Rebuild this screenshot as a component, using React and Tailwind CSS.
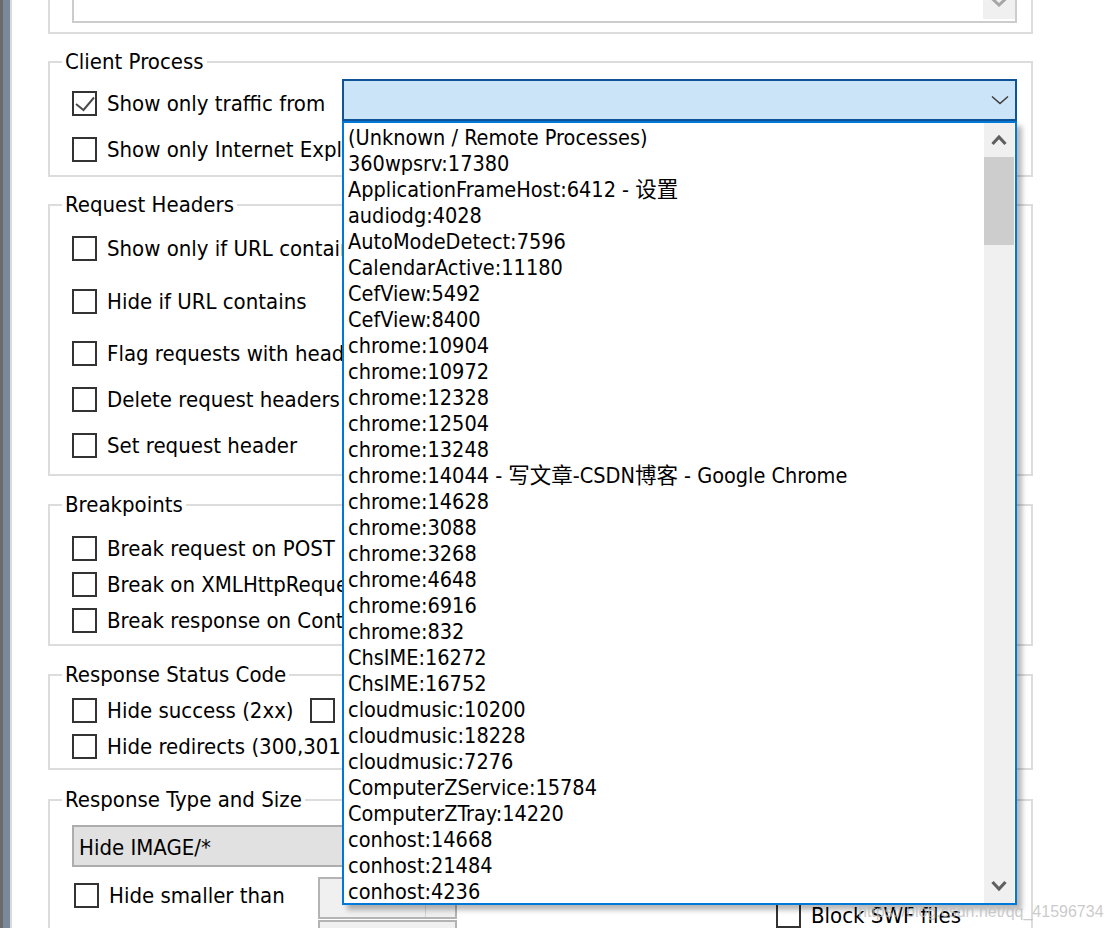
import React from "react";

const processes = [
  "(Unknown / Remote Processes)",
  "360wpsrv:17380",
  "ApplicationFrameHost:6412 - 设置",
  "audiodg:4028",
  "AutoModeDetect:7596",
  "CalendarActive:11180",
  "CefView:5492",
  "CefView:8400",
  "chrome:10904",
  "chrome:10972",
  "chrome:12328",
  "chrome:12504",
  "chrome:13248",
  "chrome:14044 - 写文章-CSDN博客 - Google Chrome",
  "chrome:14628",
  "chrome:3088",
  "chrome:3268",
  "chrome:4648",
  "chrome:6916",
  "chrome:832",
  "ChsIME:16272",
  "ChsIME:16752",
  "cloudmusic:10200",
  "cloudmusic:18228",
  "cloudmusic:7276",
  "ComputerZService:15784",
  "ComputerZTray:14220",
  "conhost:14668",
  "conhost:21484",
  "conhost:4236",
];

function Box({ checked, className = "" }) {
  return (
    <span className={`block w-[25px] h-[25px] border-2 border-[#333333] bg-white shrink-0 ${className}`}>
      {checked && (
        <svg width="21" height="21" viewBox="0 0 21 21" className="block">
          <path d="M2 11 L9.5 17 L20 4.5" fill="none" stroke="#4d4d4d" strokeWidth="2" />
        </svg>
      )}
    </span>
  );
}

function Check({ label, checked, className = "" }) {
  return (
    <div className={`flex items-center h-[25px] ${className}`}>
      <Box checked={checked} />
      <span className="ml-[10px] whitespace-nowrap leading-[25px]">{label}</span>
    </div>
  );
}

function Group({ title, className = "", children }) {
  return (
    <fieldset className={`border-2 border-[#dcdcdc] pl-[22px] pr-[14px] ${className}`}>
      <legend className="ml-[-10px] px-[3px] leading-[24px]">{title}</legend>
      {children}
    </fieldset>
  );
}

function Arrow({ up }) {
  return (
    <svg width="16" height="12" viewBox="0 0 16 12" className="block">
      <path
        d={up ? "M1.5 10 L8 3 L14.5 10" : "M1.5 2 L8 9 L14.5 2"}
        fill="none"
        stroke="#606060"
        strokeWidth="3.2"
      />
    </svg>
  );
}

function ProcessList() {
  return (
    <div className="absolute left-[342px] top-[121px] w-[675px] h-[784px] border-2 border-[#0078d7] bg-white flex shadow-[5px_5px_5px_rgba(0,0,0,0.28)]">
      <div className="flex-1 pl-[4px] pt-[2px] overflow-hidden text-[21.5px]">
        {processes.map((p) => (
          <div key={p} className="h-[26px] leading-[26px] whitespace-nowrap">
            {p}
          </div>
        ))}
      </div>
      <div className="w-[30px] mr-[1px] bg-[#f0f0f0] flex flex-col">
        <div className="h-[34px] flex items-center justify-center">
          <Arrow up />
        </div>
        <div className="h-[88px] bg-[#cdcdcd]" />
        <div className="flex-1" />
        <div className="h-[34px] flex items-center justify-center">
          <Arrow />
        </div>
      </div>
    </div>
  );
}

export default function App() {
  return (
    <div className="relative w-[1112px] h-[928px] overflow-hidden bg-white flex text-[22px] text-black font-['DejaVu_Sans_Condensed','DejaVu_Sans','Noto_Sans_CJK_SC',sans-serif] font-stretch-condensed">
      {/* window edge */}
      <div className="flex shrink-0">
        <div className="w-[3px] bg-[#6b6b6b]" />
        <div className="w-[7px] bg-[#7b8a9a]" />
        <div className="w-[2px] bg-[#dadada]" />
      </div>

      <div className="w-[1021px] pl-[36px] shrink-0">
        {/* previous group, cut off at top */}
        <div className="h-[34px] border-x-2 border-b-2 border-[#dcdcdc] pl-[22px] pr-[14px]">
          <div className="h-[23px] border-x-2 border-b-2 border-[#cccccc] flex justify-end">
            <div className="w-[32px] h-[19px] bg-[#f0f0f0] flex justify-center overflow-hidden">
              <svg width="16" height="10" viewBox="0 0 16 10" className="block -mt-[3px]">
                <path d="M1.5 2 L8 8 L14.5 2" fill="none" stroke="#a6a6a6" strokeWidth="3" />
              </svg>
            </div>
          </div>
        </div>

        <Group title="Client Process" className="mt-[16px] pb-[13px]">
          <div className="flex items-start h-[42px] mt-[5px]">
            <Check label="Show only traffic from" checked className="w-[270px] mt-[12px] shrink-0" />
            <div className="flex-1 h-[42px] bg-[#cce4f7] border-2 border-[#0f5496] flex items-center justify-end pr-[6px]">
              <svg width="18" height="10" viewBox="0 0 18 10" className="block">
                <path d="M1 1.5 L9 8.5 L17 1.5" fill="none" stroke="#3c3c3c" strokeWidth="1.6" />
              </svg>
            </div>
          </div>
          <Check label="Show only Internet Explorer traffic" className="mt-[16px]" />
        </Group>

        <Group title="Request Headers" className="mt-[16px] pb-[16px]">
          <Check label="Show only if URL contains" className="mt-[19px]" />
          <Check label="Hide if URL contains" className="mt-[28px]" />
          <Check label="Flag requests with headers" className="mt-[27px]" />
          <Check label="Delete request headers" className="mt-[21px]" />
          <Check label="Set request header" className="mt-[21px]" />
        </Group>

        <Group title="Breakpoints" className="mt-[17px] pb-[11px]">
          <Check label="Break request on POST" className="mt-[19px]" />
          <Check label="Break on XMLHttpRequest" className="mt-[11px]" />
          <Check label="Break response on Content-Type" className="mt-[11px]" />
        </Group>

        <Group title="Response Status Code" className="mt-[17px] pb-[9px]">
          <div className="flex mt-[11px]">
            <Check label="Hide success (2xx)" className="w-[238px]" />
            <Check label="Hide non-2xx" />
          </div>
          <Check label="Hide redirects (300,301,302,303,307)" className="mt-[11px]" />
        </Group>

        <Group title="Response Type and Size" className="mt-[18px] h-[200px]">
          <div className="mt-[13px] w-[620px] h-[42px] bg-[#e1e1e1] border-2 border-[#adadad] pl-[5px] pt-[2px] leading-[38px]">
            Hide IMAGE/*
          </div>
          <div className="flex mt-[10px]">
            <div className="w-[704px] shrink-0">
              <div className="flex items-start h-[42px]">
                <Check label="Hide smaller than" className="ml-[2px] mt-[6px] w-[244px]" />
                <div className="w-[139px] h-[42px] border-2 border-[#b4b4b4] bg-[#f0f0f0] flex justify-end">
                  <div className="w-[30px] border-l border-[#d4d4d4] flex items-center justify-center">
                    <span className="w-[2px] h-[2px] bg-[#555555]" />
                  </div>
                </div>
              </div>
              <div className="ml-[246px] mt-[1px] w-[139px] h-[42px] border-2 border-[#b4b4b4] bg-[#f0f0f0]" />
            </div>
            <div className="pt-[26px]">
              <Check label="Block SWF files" />
            </div>
          </div>
        </Group>
      </div>

      <ProcessList />

      <div className="absolute left-[858px] top-[902px] text-[16px] leading-[20px] text-[#bdbdbd]/80 font-['Liberation_Sans',sans-serif] font-stretch-normal whitespace-nowrap">
        https://blog.csdn.net/qq_41596734
      </div>
    </div>
  );
}
